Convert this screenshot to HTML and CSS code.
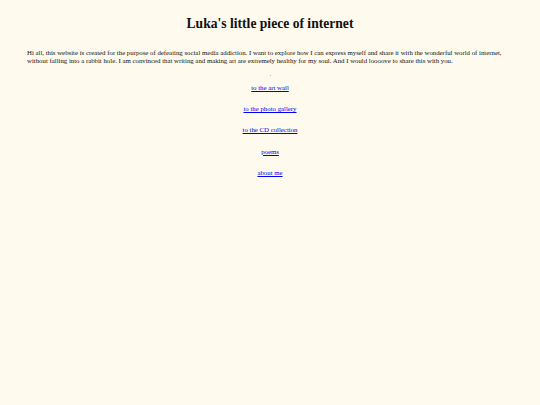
FILE: index.html
```html
<!DOCTYPE html>
<html>
<head>
<meta charset="utf-8">
<title>Luka's little piece of internet</title>
<link rel="stylesheet" href="styles.css">
</head>
<body>
<main class="page">
  <h1 class="title">Luka's little piece of internet</h1>
  <p class="intro">Hi all, this website is created for the purpose of defeating social media addiction. I want to explore how I can express myself and share it with the wonderful world of internet, without falling into a rabbit hole. I am convinced that writing and making art are extremely healthy for my soul. And I would loooove to share this with you.</p>
  <div class="dot"></div>
  <nav class="links">
    <a href="#">to the art wall</a>
    <a href="#">to the photo gallery</a>
    <a href="#">to the CD collection</a>
    <a href="#">poems</a>
    <a href="#">about me</a>
  </nav>
</main>
</body>
</html>
```
FILE: styles.css
```css
html, body {
  margin: 0;
  padding: 0;
  background: #fffaee;
}
body {
  font-family: "Liberation Serif", "Times New Roman", serif;
  color: #111;
}
.page {
  padding: 0 27px;
}
.title {
  font-size: 13.6px;
  font-weight: bold;
  text-align: center;
  margin: 0;
  padding-top: 15px;
  line-height: 18px;
}
.intro {
  font-size: 6.8px;
  line-height: 8px;
  margin: 16px 0 0;
}
.dot {
  width: 1px;
  height: 1px;
  background: #bbb;
  margin: 10px auto 0;
}
.links {
  display: flex;
  flex-direction: column;
  align-items: center;
  gap: 13.2px;
  margin-top: 8px;
}
.links a {
  font-size: 6.8px;
  line-height: 8px;
  color: #0000ee;
}
```
